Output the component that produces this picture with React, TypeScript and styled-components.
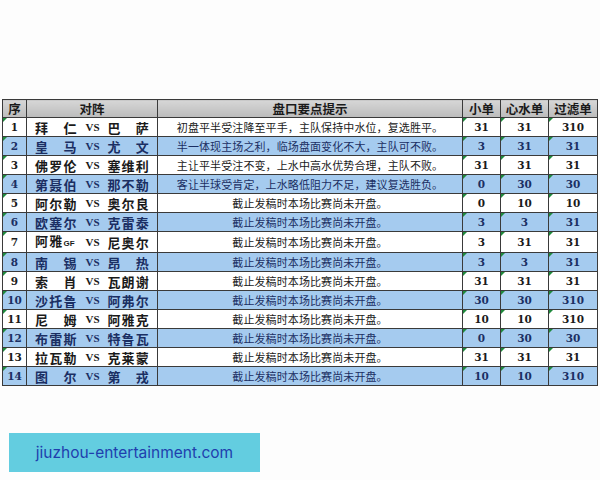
import styled, { createGlobalStyle } from 'styled-components'

const rows = [
  { no: 1, home: '拜　仁', away: '巴　萨', tip: '初盘平半受注降至平手，主队保持中水位，复选胜平。', a: '31', b: '31', c: '310' },
  { no: 2, home: '皇　马', away: '尤　文', tip: '半一体现主场之利，临场盘面变化不大，主队可不败。', a: '3', b: '31', c: '31' },
  { no: 3, home: '佛罗伦', away: '塞维利', tip: '主让平半受注不变，上水中高水优势合理，主队不败。', a: '31', b: '31', c: '31' },
  { no: 4, home: '第聂伯', away: '那不勒', tip: '客让半球受肯定，上水略低阻力不足，建议复选胜负。', a: '0', b: '30', c: '30' },
  { no: 5, home: '阿尔勒', away: '奥尔良', tip: '截止发稿时本场比赛尚未开盘。', a: '0', b: '10', c: '10' },
  { no: 6, home: '欧塞尔', away: '克雷泰', tip: '截止发稿时本场比赛尚未开盘。', a: '3', b: '3', c: '31' },
  { no: 7, home: '阿雅', homeTag: 'GF', away: '尼奥尔', tip: '截止发稿时本场比赛尚未开盘。', a: '3', b: '31', c: '31' },
  { no: 8, home: '南　锡', away: '昂　热', tip: '截止发稿时本场比赛尚未开盘。', a: '3', b: '3', c: '31' },
  { no: 9, home: '索　肖', away: '瓦朗谢', tip: '截止发稿时本场比赛尚未开盘。', a: '31', b: '31', c: '31' },
  { no: 10, home: '沙托鲁', away: '阿弗尔', tip: '截止发稿时本场比赛尚未开盘。', a: '30', b: '30', c: '310' },
  { no: 11, home: '尼　姆', away: '阿雅克', tip: '截止发稿时本场比赛尚未开盘。', a: '10', b: '10', c: '310' },
  { no: 12, home: '布雷斯', away: '特鲁瓦', tip: '截止发稿时本场比赛尚未开盘。', a: '0', b: '30', c: '30' },
  { no: 13, home: '拉瓦勒', away: '克莱蒙', tip: '截止发稿时本场比赛尚未开盘。', a: '31', b: '31', c: '31' },
  { no: 14, home: '图　尔', away: '第　戎', tip: '截止发稿时本场比赛尚未开盘。', a: '10', b: '10', c: '310' },
]

export default function App() {
  return (
    <>
      <GlobalStyle />
      <Page>
        <Sheet>
          <colgroup>
            <col style={{ width: 24 }} />
            <col style={{ width: 131 }} />
            <col style={{ width: 305 }} />
            <col style={{ width: 38 }} />
            <col style={{ width: 48 }} />
            <col style={{ width: 49 }} />
          </colgroup>
          <thead>
            <tr>
              <Head>序</Head>
              <Head>对阵</Head>
              <Head>盘口要点提示</Head>
              <Head>小单</Head>
              <Head>心水单</Head>
              <Head>过滤单</Head>
            </tr>
          </thead>
          <tbody>
            {rows.map((r) => (
              <Row key={r.no} $blue={r.no % 2 === 0}>
                <NumCell $flag>{r.no}</NumCell>
                <MatchCell>
                  <Match>
                    <Team>
                      {r.home}
                      {r.homeTag && <Tag>{r.homeTag}</Tag>}
                    </Team>
                    <Vs>VS</Vs>
                    <Team $right>{r.away}</Team>
                  </Match>
                </MatchCell>
                <TipCell>{r.tip}</TipCell>
                <NumCell $flag>{r.a}</NumCell>
                <NumCell $flag>{r.b}</NumCell>
                <NumCell $flag>{r.c}</NumCell>
              </Row>
            ))}
          </tbody>
        </Sheet>
        <Stamp>jiuzhou-entertainment.com</Stamp>
      </Page>
    </>
  )
}

const GlobalStyle = createGlobalStyle`
  body {
    margin: 0;
    background: #fdfdfd;
    font-family: "Noto Sans CJK SC", "Noto Sans", sans-serif;
  }
`

const Page = styled.div`
  width: 600px;
  height: 480px;
  padding: 99px 0 0 2px;
  box-sizing: border-box;
  overflow: hidden;
`

const Sheet = styled.table`
  width: 595px;
  table-layout: fixed;
  border-collapse: collapse;
  border: 1px solid #3a3a3a;
`

const Head = styled.th`
  height: 17px;
  padding: 0;
  background: linear-gradient(#d6d6d6, #bcbcbc);
  border: 1px solid #3a3a3a;
  font-size: 12.5px;
  font-weight: 700;
  line-height: 17px;
  color: #1a1a1a;
  text-align: center;
`

const Row = styled.tr<{ $blue: boolean }>`
  height: 19px;
  background: ${(p) => (p.$blue ? '#a5cbef' : '#ffffff')};
  color: ${(p) => (p.$blue ? '#1b2f63' : '#1a1a1a')};
`

const Cell = styled.td`
  padding: 0;
  border: 1px solid #3a3a3a;
  line-height: 17px;
  white-space: nowrap;
  overflow: hidden;
`

const NumCell = styled(Cell)<{ $flag?: boolean }>`
  position: relative;
  text-align: center;
  font-family: "DejaVu Serif", "Liberation Serif", serif;
  font-size: 10.5px;
  font-weight: 700;

  &::before {
    content: '';
    display: ${(p) => (p.$flag ? 'block' : 'none')};
    position: absolute;
    left: 0;
    top: 0;
    border-top: 4px solid #1e8a3c;
    border-right: 4px solid transparent;
  }
`

const MatchCell = styled(Cell)``

const Match = styled.div`
  display: grid;
  grid-template-columns: 1fr 28px 1fr;
  align-items: center;
  padding: 0 7px 0 8px;
`

const Team = styled.span<{ $right?: boolean }>`
  justify-self: ${(p) => (p.$right ? 'end' : 'start')};
  font-size: 13px;
  font-weight: 700;
  letter-spacing: 1.2px;
`

const Tag = styled.span`
  font-family: "Liberation Sans", sans-serif;
  font-size: 8px;
  letter-spacing: 0;
`

const Vs = styled.span`
  text-align: center;
  font-family: "Liberation Serif", serif;
  font-size: 11px;
  font-weight: 700;
`

const TipCell = styled(Cell)`
  text-align: center;
  font-size: 11px;
  letter-spacing: 0.1px;
`

const Stamp = styled.div`
  width: 251px;
  height: 39px;
  margin: 47px 0 0 7px;
  background: #63cde0;
  color: #1f3fae;
  font-family: Inter, "Liberation Sans", sans-serif;
  font-size: 15.5px;
  line-height: 39px;
  text-align: center;
`
